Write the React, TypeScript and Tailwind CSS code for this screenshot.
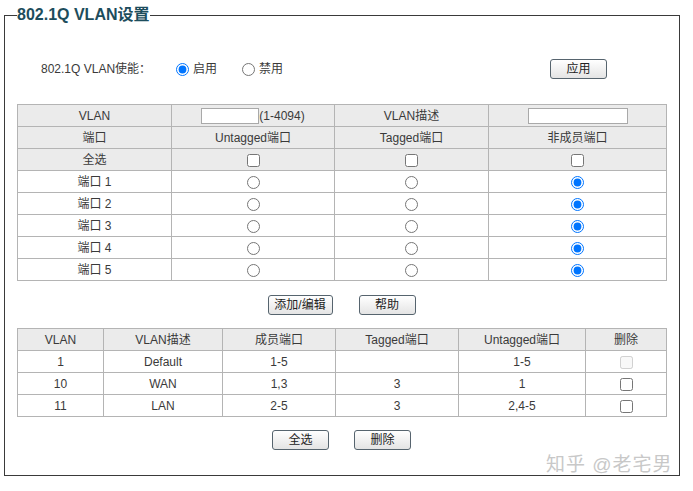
import React from 'react';

const font = "font-['Liberation_Sans','Noto_Sans_CJK_SC',sans-serif]";

const Btn = ({ label, w = 'w-[57px]' }: { label: string; w?: string }) => (
  <button
    className={`${w} h-[20px] rounded-[3px] border border-[#56646e] bg-gradient-to-b from-white to-[#e4e4e4] text-[12px] text-[#222] leading-none`}
  >
    {label}
  </button>
);

const ports = ['端口 1', '端口 2', '端口 3', '端口 4', '端口 5'];

const vlans = [
  { id: '1', desc: 'Default', members: '1-5', tagged: '', untagged: '1-5', fixed: true },
  { id: '10', desc: 'WAN', members: '1,3', tagged: '3', untagged: '1', fixed: false },
  { id: '11', desc: 'LAN', members: '2-5', tagged: '3', untagged: '2,4-5', fixed: false },
];

const td = 'border border-[#b4b4b4] h-[22px] p-0 text-center align-middle';

export default function App() {
  return (
    <div className={`relative w-[693px] h-[491px] bg-white text-[12px] text-[#3a3a3a] ${font}`}>
      <fieldset className="ml-[4px] mt-[5px] w-[676px] border border-[#3a3a3a]">
        <legend className="ml-[12px] h-[20px] text-[16px] font-bold leading-[20px] text-[#1d4d5c]">
          802.1Q VLAN设置
        </legend>

        {/* enable row */}
        <div className="mt-[34px] flex h-[20px] items-center pl-[36px]">
          <span className="w-[108px] shrink-0 whitespace-nowrap">802.1Q VLAN使能：</span>
          <label className="ml-[27px] flex items-center gap-[4px] whitespace-nowrap">
            <input type="radio" name="en" defaultChecked className="h-[13px] w-[13px]" />
            <span>启用</span>
          </label>
          <label className="ml-[25px] flex items-center gap-[4px] whitespace-nowrap">
            <input type="radio" name="en" className="h-[13px] w-[13px]" />
            <span>禁用</span>
          </label>
          <div className="ml-[267px] flex">
            <Btn label="应用" />
          </div>
        </div>

        {/* edit table */}
        <table className="ml-[12px] mt-[25px] w-[649px] table-fixed border-collapse">
          <colgroup>
            <col className="w-[154px]" />
            <col className="w-[163px]" />
            <col className="w-[154px]" />
            <col className="w-[178px]" />
          </colgroup>
          <tbody>
            <tr className="bg-[#ebebeb]">
              <td className={td}>VLAN</td>
              <td className={td}>
                <div className="flex items-center justify-center">
                  <input className="h-[16px] w-[58px] border border-[#a9a9a9] bg-white" />
                  <span>(1-4094)</span>
                </div>
              </td>
              <td className={td}>VLAN描述</td>
              <td className={td}>
                <div className="flex items-center justify-center">
                  <input className="h-[16px] w-[100px] border border-[#a9a9a9] bg-white" />
                </div>
              </td>
            </tr>
            <tr className="bg-[#ebebeb]">
              <td className={td}>端口</td>
              <td className={td}>Untagged端口</td>
              <td className={td}>Tagged端口</td>
              <td className={td}>非成员端口</td>
            </tr>
            <tr className="bg-[#ebebeb]">
              <td className={td}>全选</td>
              {[0, 1, 2].map((i) => (
                <td key={i} className={td}>
                  <input type="checkbox" className="h-[13px] w-[13px] align-middle" />
                </td>
              ))}
            </tr>
            {ports.map((p, r) => (
              <tr key={p} className="bg-white">
                <td className={td}>{p}</td>
                {[0, 1, 2].map((i) => (
                  <td key={i} className={td}>
                    <input
                      type="radio"
                      name={`port${r}`}
                      defaultChecked={i === 2}
                      className="h-[13px] w-[13px] align-middle"
                    />
                  </td>
                ))}
              </tr>
            ))}
          </tbody>
        </table>

        <div className="ml-[12px] mt-[14px] flex h-[20px] w-[649px] justify-center gap-[26px]">
          <Btn label="添加/编辑" w="w-[65px]" />
          <Btn label="帮助" />
        </div>

        {/* vlan list */}
        <table className="ml-[12px] mt-[13px] w-[649px] table-fixed border-collapse">
          <colgroup>
            <col className="w-[86px]" />
            <col className="w-[119px]" />
            <col className="w-[113px]" />
            <col className="w-[123px]" />
            <col className="w-[127px]" />
            <col className="w-[81px]" />
          </colgroup>
          <tbody>
            <tr className="bg-[#ebebeb]">
              <td className={td}>VLAN</td>
              <td className={td}>VLAN描述</td>
              <td className={td}>成员端口</td>
              <td className={td}>Tagged端口</td>
              <td className={td}>Untagged端口</td>
              <td className={td}>删除</td>
            </tr>
            {vlans.map((v) => (
              <tr key={v.id} className="bg-white">
                <td className={td}>{v.id}</td>
                <td className={td}>{v.desc}</td>
                <td className={td}>{v.members}</td>
                <td className={td}>{v.tagged}</td>
                <td className={td}>{v.untagged}</td>
                <td className={td}>
                  <input type="checkbox" disabled={v.fixed} className="h-[13px] w-[13px] align-middle" />
                </td>
              </tr>
            ))}
          </tbody>
        </table>

        <div className="ml-[12px] mt-[13px] mb-[25px] flex h-[20px] w-[649px] justify-center gap-[25px]">
          <Btn label="全选" />
          <Btn label="删除" />
        </div>
      </fieldset>

      {/* watermark */}
      <div className="absolute left-[546px] top-[447px] text-[19px] leading-[26px] tracking-[1px] text-[#c8c8c8]">
        知乎 @老宅男
      </div>
    </div>
  );
}
